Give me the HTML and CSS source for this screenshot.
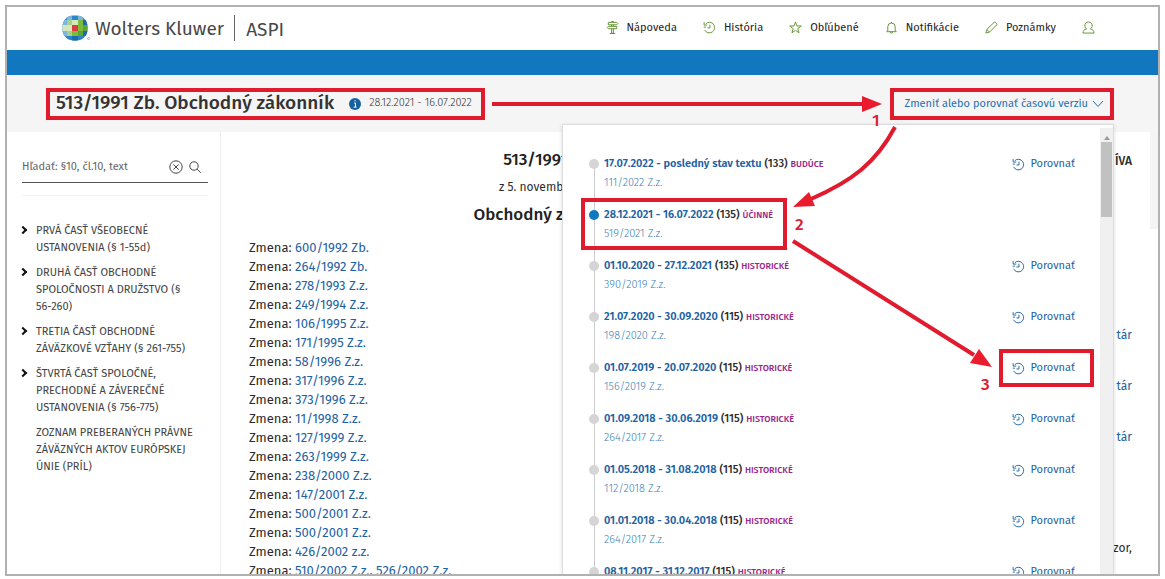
FILE: index.html
```html
<!DOCTYPE html>
<html lang="sk">
<head>
<meta charset="utf-8">
<title>ASPI – 513/1991 Zb. Obchodný zákonník</title>
<link rel="stylesheet" href="styles.css">
</head>
<body>
<svg class="defs" aria-hidden="true">
  <symbol id="history" viewBox="0 0 14 14"><path d="M3 2.9A5.700 5.700 0 1 1 1.700 9.500M1.200 1.200v3.200h3.400M.8 6.600h2.400M7.500 4v3.500H4.800"/></symbol>
</svg>
<main class="stage">
  <div class="window">
    <header class="top">
      <div class="brand">
        <svg class="globe" viewBox="0 0 28 26" aria-hidden="true">
          <clipPath id="ball"><rect x=".5" y=".5" width="25" height="25" rx="11"/></clipPath>
          <g clip-path="url(#ball)">
            <path fill="#2b86c5" d="M0 0h26v26H0z"/>
            <path fill="#7fb4dc" d="M5 0h5v5H5zM16 0h5v5h-5zM0 5h5v5H0zM0 16h5v5H0z"/>
            <path fill="#1f6aa9" d="M21 5h5v5h-5zM21 16h5v5h-5zM10 21h6v5h-6z"/>
            <path fill="#7dbb3c" d="M5 5h16v16H5z"/>
            <path fill="#a9d18d" d="M5 5h5v5H5zM5 16h5v5H5z"/>
            <path fill="#d3e8bd" d="M10 5h6v5h-6zM5 10h5v6H5zM0 10h5v6H0z"/>
            <path fill="#5da53a" d="M16 16h5v5h-5zM21 10h5v6h-5z"/>
            <path fill="#e0393e" d="M10 10h6v6h-6z"/>
          </g>
          <circle cx="26.500" cy="23.500" r="1" fill="none" stroke="#888" stroke-width=".6"/>
        </svg>
        <span class="name">Wolters Kluwer</span>
        <span class="product">ASPI</span>
      </div>
      <nav class="menu">
        <a href="#"><svg class="icon" viewBox="0 0 14 14"><path d="M6 1.200V.5h2v.7M2.500 1.500h9l1.200 1.300-1.200 1.300h-9zM11.500 5.800h-9L1.300 7.100l1.200 1.200h9zM6 4.100v1.700M8 4.100v1.700M6 8.300v5h2v-5M4 13.400h6"/></svg>Nápoveda</a>
        <a href="#"><svg class="icon"><use href="#history"/></svg>História</a>
        <a href="#"><svg class="icon" viewBox="0 0 14 14"><path d="M7 1l1.500 4.300 4.700.1-3.700 2.800 1.300 4.500L7 10l-3.800 2.700 1.300-4.500L.8 5.400l4.700-.1z"/></svg>Obľúbené</a>
        <a href="#"><svg class="icon" viewBox="0 0 14 14"><path d="M1.500 11.500h11M3 11.300V6.200a4 4 0 0 1 8 0v5.100M7 2.200V1M5.700 11.800a1.300 1.300 0 0 0 2.600 0"/></svg>Notifikácie</a>
        <a href="#"><svg class="icon" viewBox="0 0 14 14"><path d="M1 13l1-3.800L9.800 1.400c1-1 3.800 1.600 2.800 2.800L4.800 12zM2 9.200L4.800 12"/></svg>Poznámky</a>
        <a href="#" aria-label="Používateľ"><svg class="icon" viewBox="0 0 14 14"><path d="M5 8.500A4 4 0 1 1 9 8.500c2.400.6 3.800 1.600 4 4.500H1c.2-2.900 1.600-3.900 4-4.500z"/></svg></a>
      </nav>
    </header>
    <div class="bluebar"></div>
    <section class="titlebar">
      <div class="mark heading">
        <h1>513/1991 Zb. Obchodný zákonník</h1>
        <svg class="info" viewBox="0 0 12 12" aria-hidden="true"><circle cx="6" cy="6" r="6" fill="#15609f"/><path d="M5 5h1.500v4M4.600 9.100h3M5.500 2.800h1.200" fill="none" stroke="#fff"/></svg>
        <span class="range">28.12.2021 - 16.07.2022</span>
      </div>
      <div class="version">
        <button class="mark toggle" type="button">Zmeniť alebo porovnať časovú verziu
          <svg class="chev" viewBox="0 0 12 8" aria-hidden="true"><path d="M1 1l5 5.500L11 1"/></svg></button>
        <div class="panel">
          <ol class="timeline">
            <li><div><a class="date" href="#">17.07.2022 - posledný stav textu</a> <b>(133)</b> <em>BUDÚCE</em><a class="law" href="#">111/2022 Z.z.</a></div><a class="compare" href="#"><svg class="icon"><use href="#history"/></svg>Porovnať</a></li>
            <li class="current"><div><a class="date" href="#">28.12.2021 - 16.07.2022</a> <b>(135)</b> <em>ÚČINNÉ</em><a class="law" href="#">519/2021 Z.z.</a></div></li>
            <li><div><a class="date" href="#">01.10.2020 - 27.12.2021</a> <b>(135)</b> <em>HISTORICKÉ</em><a class="law" href="#">390/2019 Z.z.</a></div><a class="compare" href="#"><svg class="icon"><use href="#history"/></svg>Porovnať</a></li>
            <li><div><a class="date" href="#">21.07.2020 - 30.09.2020</a> <b>(115)</b> <em>HISTORICKÉ</em><a class="law" href="#">198/2020 Z.z.</a></div><a class="compare" href="#"><svg class="icon"><use href="#history"/></svg>Porovnať</a></li>
            <li><div><a class="date" href="#">01.07.2019 - 20.07.2020</a> <b>(115)</b> <em>HISTORICKÉ</em><a class="law" href="#">156/2019 Z.z.</a></div><a class="compare picked" href="#"><svg class="icon"><use href="#history"/></svg>Porovnať</a></li>
            <li><div><a class="date" href="#">01.09.2018 - 30.06.2019</a> <b>(115)</b> <em>HISTORICKÉ</em><a class="law" href="#">264/2017 Z.z.</a></div><a class="compare" href="#"><svg class="icon"><use href="#history"/></svg>Porovnať</a></li>
            <li><div><a class="date" href="#">01.05.2018 - 31.08.2018</a> <b>(115)</b> <em>HISTORICKÉ</em><a class="law" href="#">112/2018 Z.z.</a></div><a class="compare" href="#"><svg class="icon"><use href="#history"/></svg>Porovnať</a></li>
            <li><div><a class="date" href="#">01.01.2018 - 30.04.2018</a> <b>(115)</b> <em>HISTORICKÉ</em><a class="law" href="#">264/2017 Z.z.</a></div><a class="compare" href="#"><svg class="icon"><use href="#history"/></svg>Porovnať</a></li>
            <li><div><a class="date" href="#">08.11.2017 - 31.12.2017</a> <b>(115)</b> <em>HISTORICKÉ</em></div><a class="compare" href="#"><svg class="icon"><use href="#history"/></svg>Porovnať</a></li>
          </ol>
          <div class="scroll"><svg class="up" viewBox="0 0 6 4" aria-hidden="true"><path d="M0 4l3-4 3 4z" fill="#999"/></svg><div class="thumb"></div></div>
        </div>
      </div>
    </section>
    <div class="content">
      <aside class="side">
        <form class="search">
          <input type="text" aria-label="Hľadať" placeholder="Hľadať: §10, čl.10, text">
          <button type="button" aria-label="Vymazať"><svg class="glyph" viewBox="0 0 14 14"><circle cx="7" cy="7" r="6.200"/><path d="M4.300 4.300l5.400 5.400M9.700 4.300L4.300 9.700"/></svg></button>
          <button type="button" aria-label="Hľadať"><svg class="glyph" viewBox="0 0 14 14"><circle cx="6" cy="6" r="4.200"/><path d="M9.200 9.200l3.600 3.600"/></svg></button>
        </form>
        <ul class="tree">
          <li>PRVÁ ČASŤ VŠEOBECNÉ USTANOVENIA (§ 1-55d)</li>
          <li>DRUHÁ ČASŤ OBCHODNÉ SPOLOČNOSTI A DRUŽSTVO (§ <span class="whole">56-260)</span></li>
          <li>TRETIA ČASŤ OBCHODNÉ ZÁVÄZKOVÉ VZŤAHY (§ 261-755)</li>
          <li>ŠTVRTÁ ČASŤ SPOLOČNÉ, PRECHODNÉ A ZÁVEREČNÉ USTANOVENIA (§ 756-775)</li>
          <li class="leaf">ZOZNAM PREBERANÝCH PRÁVNE ZÁVÄZNÝCH AKTOV EURÓPSKEJ ÚNIE (PRÍL)</li>
        </ul>
      </aside>
      <article class="doc">
        <h2>513/1991 Zb.</h2>
        <p class="when">z 5. novembra 1991</p>
        <h2>Obchodný zákonník</h2>
        <ul class="changes">
          <li>Zmena: <a href="#">600/1992 Zb.</a></li>
          <li>Zmena: <a href="#">264/1992 Zb.</a></li>
          <li>Zmena: <a href="#">278/1993 Z.z.</a></li>
          <li>Zmena: <a href="#">249/1994 Z.z.</a></li>
          <li>Zmena: <a href="#">106/1995 Z.z.</a></li>
          <li>Zmena: <a href="#">171/1995 Z.z.</a></li>
          <li>Zmena: <a href="#">58/1996 Z.z.</a></li>
          <li>Zmena: <a href="#">317/1996 Z.z.</a></li>
          <li>Zmena: <a href="#">373/1996 Z.z.</a></li>
          <li>Zmena: <a href="#">11/1998 Z.z.</a></li>
          <li>Zmena: <a href="#">127/1999 Z.z.</a></li>
          <li>Zmena: <a href="#">263/1999 Z.z.</a></li>
          <li>Zmena: <a href="#">238/2000 Z.z.</a></li>
          <li>Zmena: <a href="#">147/2001 Z.z.</a></li>
          <li>Zmena: <a href="#">500/2001 Z.z.</a></li>
          <li>Zmena: <a href="#">500/2001 Z.z.</a></li>
          <li>Zmena: <a href="#">426/2002 z.z.</a></li>
          <li>Zmena: <a href="#">510/2002 Z.z.</a>, <a href="#">526/2002 Z.z.</a></li>
        </ul>
      </article>
      <aside class="related">
        <h3>ÍVA</h3>
        <a href="#">tár</a>
        <a href="#">tár</a>
        <a href="#">tár</a>
        <p>zor,</p>
      </aside>
      <div class="gutter"></div>
    </div>
  </div>
  <svg class="arrows" aria-hidden="true">
    <g fill="none" stroke="#e01b2e" stroke-width="4">
      <path d="M492 104H864"/>
      <path d="M895 127C876 163 852 181 811 199"/>
      <path d="M793 241L974 355"/>
    </g>
    <g fill="#e91b2d">
      <path d="M862 96l20 8-20 8z"/>
      <path d="M793 207l16-15 6 14z"/>
      <path d="M992 367l-22-4 9-14z"/>
    </g>
    <g class="steps"><text x="872" y="126">1</text><text x="795" y="230">2</text><text x="981" y="390">3</text></g>
  </svg>
</main>
</body>
</html>
```
FILE: styles.css
```css
*, *::before, *::after { box-sizing: border-box; }
body { margin: 0; background: #fff; color: #2b2b2b; font: 11px/18px "Fira Sans", "Noto Sans", sans-serif; }
a { color: #1c62a3; text-decoration: none; }
ul, ol { list-style: none; margin: 0; padding: 0; }
h1, h2, h3, p { margin: 0; }
button { background: none; border: 0; padding: 0; font: inherit; }
.defs { position: absolute; width: 0; height: 0; }
.stage { position: relative; display: flex; height: 100vh; padding: 5px 5px 3px 5px; }
.window { flex: 1; min-width: 0; display: flex; flex-direction: column; overflow: hidden; border: 2px solid #b1b1b1; }
.icon { width: 13px; height: 13px; flex: none; fill: none; stroke: currentColor; stroke-width: 1; }

.top { display: flex; justify-content: space-between; align-items: center; height: 43px; padding: 0 63px 2px 55px; flex: none; }
.brand { display: flex; align-items: center; color: #474747; font-size: 19px; line-height: 26px; }
.globe { width: 28px; height: 26px; margin-right: 5px; }
.name { padding-top: 3px; }
.product { margin-left: 10px; padding: 3px 0 0 11px; line-height: 23px; border-left: 1px solid #666; }
.menu { display: flex; gap: 26px; }
.menu a { display: flex; align-items: center; gap: 8px; color: #222; }
.menu .icon { color: #5f8f2e; }

.bluebar { height: 25px; margin: 0 -2px; background: #1178c0; flex: none; }
.titlebar { display: flex; justify-content: space-between; align-items: flex-start; height: 57px; padding: 13px 44px 0 39px; background: #f6f5f5; flex: none; }
.mark { height: 32px; border: 4px solid #e01b2e; display: flex; align-items: center; }
.heading { padding: 0 9px 2px 6px; gap: 8px; }
h1 { font-size: 19px; line-height: 24px; font-weight: 500; color: #333; margin-right: 7px; }
.info { width: 12px; height: 12px; margin-top: 2px; }
.range { font-weight: 300; color: #333; }
.version { position: relative; }
.toggle { padding: 0 6px 1px 11px; gap: 4px; color: #2270b3; }
.chev { width: 12px; height: 8px; fill: none; stroke: currentColor; }

.panel { position: absolute; z-index: 2; top: 36px; right: 0; width: 552px; height: 460px; display: flex; background: #fff; border: 1px solid #ddd; box-shadow: 0 1px 4px #0002; }
.timeline { flex: 1; padding: 30px 25px 0 25px; }
.timeline li { position: relative; display: flex; justify-content: space-between; align-items: flex-start; height: 51px; padding-left: 16px; white-space: nowrap; }
.timeline li::before { content: ""; position: absolute; left: 6px; top: 10px; width: 1px; height: 51px; background: #ccc; }
.timeline li::after { content: ""; position: absolute; left: 1px; top: 4px; width: 10px; height: 10px; border-radius: 50%; background: #d5d5d5; }
.timeline .current::after { background: #1178c0; }
.current > div::before { content: ""; position: absolute; z-index: 1; left: -7px; top: -8px; width: 206px; height: 52px; border: 4px solid #e01b2e; }
.date { font-weight: 600; }
.timeline b { font-weight: 500; }
.timeline em { font-style: normal; font-weight: 500; font-size: 9px; color: #9a2587; }
.law { display: block; margin-top: 1px; font-weight: 300; color: #3c7fb5; }
.compare { position: relative; display: flex; align-items: center; gap: 5px; }
.picked::before { content: ""; position: absolute; left: -13px; top: -10px; right: -19px; bottom: -10px; border: 4px solid #e01b2e; }
.scroll { width: 13px; padding: 8px 1px 0; background: #f0f0f0; display: flex; flex-direction: column; align-items: center; gap: 2px; margin-top: 3px; }
.up { width: 6px; height: 4px; }
.thumb { width: 11px; height: 75px; background: #c1c1c1; }

.content { flex: 1; min-height: 0; display: flex; }
.side { width: 214px; flex: none; padding: 22px 12px 0 15px; border-right: 1px solid #eee; }
.search { display: flex; align-items: center; gap: 5px; height: 29px; padding: 0 6px 3px 0; border-bottom: 1px solid #555; }
.search input { flex: 1; min-width: 0; padding: 0; border: 0; background: none; font: inherit; outline: 0; }
.search input::placeholder { color: #666; }
.search button { height: 14px; }
.glyph { display: block; width: 14px; height: 14px; fill: none; stroke: #444; }
.tree { margin-top: 12px; padding-top: 26px; border-top: 1px solid #f2f2f2; display: grid; gap: 8px; line-height: 17px; color: #444; }
.tree li { position: relative; padding-left: 14px; }
.tree li::before { content: ""; position: absolute; left: -2px; top: 5px; width: 6px; height: 6px; border: solid #111; border-width: 2px 2px 0 0; transform: rotate(45deg); }
.tree .leaf::before { display: none; }
.whole { white-space: nowrap; }
.doc { flex: 1; min-width: 0; padding: 16px 0 0 28px; text-align: center; }
.doc h2 { font-size: 17px; line-height: 24px; font-weight: 500; color: #222; padding-right: 4px; }
.when { font-size: 12px; line-height: 18px; margin: 6px 4px 7px 0; }
.changes { margin-top: 11px; text-align: left; font-size: 13px; line-height: 19px; }
.related { width: 278px; flex: none; padding: 20px 0 0; display: flex; flex-direction: column; align-items: flex-end; font-size: 12px; }
.related h3 { font-size: 12px; line-height: 18px; font-weight: 500; margin-bottom: 156px; }
.related a { margin-bottom: 33px; }
.related p { margin-top: 60px; }
.gutter { width: 8px; height: 97px; margin-left: 18px; background: #f5f4f4; flex: none; }

.arrows { position: absolute; z-index: 3; left: 0; top: 0; width: 100%; height: 100%; pointer-events: none; }
.steps { fill: #e01b2e; font-size: 17px; font-weight: 500; }
```
